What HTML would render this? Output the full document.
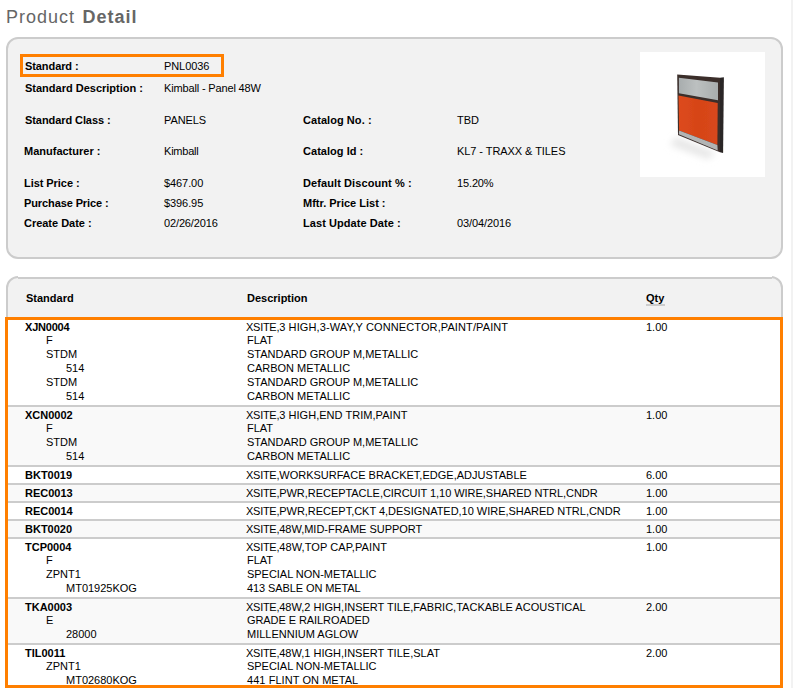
<!DOCTYPE html>
<html><head><meta charset="utf-8">
<style>
html,body{margin:0;padding:0;background:#fff;}
body{width:793px;height:688px;overflow:hidden;position:relative;font-family:"Liberation Sans",sans-serif;font-size:11px;line-height:13px;color:#000;}
.abs{position:absolute;white-space:nowrap;}
h1{position:absolute;left:6px;top:7px;margin:0;font-size:18px;font-weight:normal;color:#666;letter-spacing:1px;line-height:21px;white-space:nowrap;}
h1 b{font-weight:bold;margin-left:1.4px;}
.strip{position:absolute;left:791px;top:0;width:2px;height:688px;background:#f2f2f2;}
.p1{position:absolute;left:6px;top:37px;width:773px;height:218px;border:2px solid #ccc;border-radius:12px;background:#f2f2f2;}
.hl{position:absolute;left:20px;top:54px;width:198px;height:17px;border:3px solid #ff7f00;}
.l{font-weight:bold;}
.img{position:absolute;left:640px;top:52px;width:125px;height:125px;background:#fff;}
.p2{position:absolute;left:6px;top:276px;width:773px;height:430px;border:2px solid #ccc;border-radius:12px;background:#f2f2f2;}
.tb{position:absolute;left:5px;top:317px;width:772px;height:365px;border:3px solid #ff7f00;}
.xs{letter-spacing:-0.27px;}
.row{position:absolute;left:8px;width:772px;border-top:2px solid #ccc;box-sizing:border-box;}
</style></head><body>
<h1>Product <b>Detail</b></h1>
<div class="strip"></div>
<div class="p1"></div>
<div class="hl"></div>
<div class="abs l" style="left:25px;top:60px;letter-spacing:-0.085px">Standard :</div>
<div class="abs" style="left:164px;top:60px;letter-spacing:-0.083px">PNL0036</div>
<div class="abs l" style="left:25px;top:82px">Standard Description :</div>
<div class="abs" style="left:164px;top:82px;letter-spacing:-0.151px">Kimball - Panel 48W</div>
<div class="abs l" style="left:25px;top:114px;letter-spacing:-0.078px">Standard Class :</div>
<div class="abs" style="left:164px;top:114px;letter-spacing:-0.085px">PANELS</div>
<div class="abs l" style="left:303px;top:114px;letter-spacing:0.059px">Catalog No. :</div>
<div class="abs" style="left:457px;top:114px">TBD</div>
<div class="abs l" style="left:24px;top:145px">Manufacturer :</div>
<div class="abs" style="left:164px;top:145px;letter-spacing:-0.211px">Kimball</div>
<div class="abs l" style="left:303px;top:145px;letter-spacing:0.034px">Catalog Id :</div>
<div class="abs" style="left:457px;top:145px;letter-spacing:-0.065px">KL7 - TRAXX &amp; TILES</div>
<div class="abs l" style="left:24px;top:177px;letter-spacing:-0.058px">List Price :</div>
<div class="abs" style="left:164px;top:177px;letter-spacing:-0.082px">$467.00</div>
<div class="abs l" style="left:303px;top:177px;letter-spacing:0.092px">Default Discount % :</div>
<div class="abs" style="left:457px;top:177px;letter-spacing:-0.135px">15.20%</div>
<div class="abs l" style="left:24px;top:197px;letter-spacing:-0.105px">Purchase Price :</div>
<div class="abs" style="left:164px;top:197px;letter-spacing:-0.082px">$396.95</div>
<div class="abs l" style="left:303px;top:197px">Mftr. Price List :</div>
<div class="abs l" style="left:24px;top:217px;letter-spacing:-0.024px">Create Date :</div>
<div class="abs" style="left:164px;top:217px;letter-spacing:-0.137px">02/26/2016</div>
<div class="abs l" style="left:303px;top:217px;letter-spacing:0.069px">Last Update Date :</div>
<div class="abs" style="left:457px;top:217px;letter-spacing:-0.117px">03/04/2016</div>
<svg class="img" width="125" height="125" viewBox="0 0 125 125">
<defs>
<filter id="bl" x="-10%" y="-10%" width="120%" height="120%"><feGaussianBlur stdDeviation="0.6"/></filter>
<filter id="sh" x="-40%" y="-40%" width="180%" height="180%"><feGaussianBlur stdDeviation="3.5"/></filter>
<linearGradient id="gg" x1="0" y1="0" x2="1" y2="0"><stop offset="0" stop-color="#a8adae"/><stop offset="0.45" stop-color="#bcc0c0"/><stop offset="1" stop-color="#a9adad"/></linearGradient>
<linearGradient id="og" x1="0" y1="0" x2="1" y2="0"><stop offset="0" stop-color="#dd4b1c"/><stop offset="0.5" stop-color="#d64418"/><stop offset="1" stop-color="#d8481b"/></linearGradient>
</defs>
<rect width="125" height="125" fill="#fff"/>
<polygon points="36,85 76,101 68,107 30,93" fill="#e6e6e6" filter="url(#sh)"/>
<g filter="url(#bl)">
<polygon points="37.2,22.4 80,25.8 80,100.3 38,83" fill="#3a2d2a"/>
<polygon points="80,25.8 83.9,25.3 83.1,100.9 80,100.3" fill="#2b2726"/>
<polygon points="38.9,25.7 78,30.4 78,48.2 38.9,41.3" fill="url(#gg)"/>
<polygon points="38.5,43.6 77.7,51 77.4,92.9 39.1,78.5" fill="url(#og)"/>
<polygon points="39.1,78.5 77.4,92.9 77.7,98.4 38.8,82.2" fill="#b2b4b4"/>
</g>
</svg>
<div class="p2"></div>
<div style="position:absolute;left:18px;top:276px;width:754px;height:1px;background:#fff"></div><div style="position:absolute;left:18px;top:278px;width:754px;height:1px;background:#ccc"></div>
<div class="abs l" style="left:26px;top:292px">Standard</div>
<div class="abs l" style="left:247px;top:292px">Description</div>
<div class="abs l" style="left:646px;top:292px">Qty</div><div style="position:absolute;left:646px;top:304px;width:19px;height:2px;background:#ccc"></div>
<div class="row" style="top:317px;height:88px;background:#fff"></div>
<div class="abs l" style="left:25px;top:321px;letter-spacing:-0.211px">XJN0004</div>
<div class="abs" style="left:246px;top:321px;letter-spacing:0.106px"><span class="xs">XSITE,</span>3 HIGH,3-WAY,Y CONNECTOR,PAINT/PAINT</div>
<div class="abs" style="left:646px;top:321px">1.00</div>
<div class="abs" style="left:46px;top:334px">F</div>
<div class="abs" style="left:247px;top:334px">FLAT</div>
<div class="abs" style="left:46px;top:348px">STDM</div>
<div class="abs" style="left:247px;top:348px">STANDARD GROUP M,METALLIC</div>
<div class="abs" style="left:66px;top:362px">514</div>
<div class="abs" style="left:247px;top:362px">CARBON METALLIC</div>
<div class="abs" style="left:46px;top:376px">STDM</div>
<div class="abs" style="left:247px;top:376px">STANDARD GROUP M,METALLIC</div>
<div class="abs" style="left:66px;top:390px">514</div>
<div class="abs" style="left:247px;top:390px">CARBON METALLIC</div>
<div class="row" style="top:405px;height:60px;background:#f9f9f9"></div>
<div class="abs l" style="left:25px;top:409px">XCN0002</div>
<div class="abs" style="left:246px;top:409px;letter-spacing:0.040px"><span class="xs">XSITE,</span>3 HIGH,END TRIM,PAINT</div>
<div class="abs" style="left:646px;top:409px">1.00</div>
<div class="abs" style="left:46px;top:422px">F</div>
<div class="abs" style="left:247px;top:422px">FLAT</div>
<div class="abs" style="left:46px;top:436px">STDM</div>
<div class="abs" style="left:247px;top:436px">STANDARD GROUP M,METALLIC</div>
<div class="abs" style="left:66px;top:450px">514</div>
<div class="abs" style="left:247px;top:450px">CARBON METALLIC</div>
<div class="row" style="top:465px;height:18px;background:#fff"></div>
<div class="abs l" style="left:25px;top:469px">BKT0019</div>
<div class="abs" style="left:246px;top:469px;letter-spacing:0.009px"><span class="xs">XSITE,</span>WORKSURFACE BRACKET,EDGE,ADJUSTABLE</div>
<div class="abs" style="left:646px;top:469px">6.00</div>
<div class="row" style="top:483px;height:18px;background:#f9f9f9"></div>
<div class="abs l" style="left:25px;top:487px">REC0013</div>
<div class="abs" style="left:246px;top:487px;letter-spacing:-0.043px"><span class="xs">XSITE,</span>PWR,RECEPTACLE,CIRCUIT 1,10 WIRE,SHARED NTRL,CNDR</div>
<div class="abs" style="left:646px;top:487px">1.00</div>
<div class="row" style="top:501px;height:18px;background:#fff"></div>
<div class="abs l" style="left:25px;top:505px">REC0014</div>
<div class="abs" style="left:246px;top:505px;letter-spacing:-0.021px"><span class="xs">XSITE,</span>PWR,RECEPT,CKT 4,DESIGNATED,10 WIRE,SHARED NTRL,CNDR</div>
<div class="abs" style="left:646px;top:505px">1.00</div>
<div class="row" style="top:519px;height:18px;background:#f9f9f9"></div>
<div class="abs l" style="left:25px;top:523px">BKT0020</div>
<div class="abs" style="left:246px;top:523px;letter-spacing:-0.018px"><span class="xs">XSITE,</span>48W,MID-FRAME SUPPORT</div>
<div class="abs" style="left:646px;top:523px">1.00</div>
<div class="row" style="top:537px;height:60px;background:#fff"></div>
<div class="abs l" style="left:25px;top:541px">TCP0004</div>
<div class="abs" style="left:246px;top:541px;letter-spacing:0.093px"><span class="xs">XSITE,</span>48W,TOP CAP,PAINT</div>
<div class="abs" style="left:646px;top:541px">1.00</div>
<div class="abs" style="left:46px;top:554px">F</div>
<div class="abs" style="left:247px;top:554px">FLAT</div>
<div class="abs" style="left:46px;top:568px">ZPNT1</div>
<div class="abs" style="left:247px;top:568px;letter-spacing:-0.035px">SPECIAL NON-METALLIC</div>
<div class="abs" style="left:66px;top:582px">MT01925KOG</div>
<div class="abs" style="left:247px;top:582px;letter-spacing:-0.098px">413 SABLE ON METAL</div>
<div class="row" style="top:597px;height:46px;background:#f9f9f9"></div>
<div class="abs l" style="left:25px;top:601px">TKA0003</div>
<div class="abs" style="left:246px;top:601px;letter-spacing:0.009px"><span class="xs">XSITE,</span>48W,2 HIGH,INSERT TILE,FABRIC,TACKABLE ACOUSTICAL</div>
<div class="abs" style="left:646px;top:601px">2.00</div>
<div class="abs" style="left:46px;top:614px">E</div>
<div class="abs" style="left:247px;top:614px;letter-spacing:-0.077px">GRADE E RAILROADED</div>
<div class="abs" style="left:66px;top:628px">28000</div>
<div class="abs" style="left:247px;top:628px">MILLENNIUM AGLOW</div>
<div class="row" style="top:643px;height:45px;background:#fff"></div>
<div class="abs l" style="left:25px;top:647px">TIL0011</div>
<div class="abs" style="left:246px;top:647px;letter-spacing:0.004px"><span class="xs">XSITE,</span>48W,1 HIGH,INSERT TILE,SLAT</div>
<div class="abs" style="left:646px;top:647px">2.00</div>
<div class="abs" style="left:46px;top:660px">ZPNT1</div>
<div class="abs" style="left:247px;top:660px;letter-spacing:-0.035px">SPECIAL NON-METALLIC</div>
<div class="abs" style="left:66px;top:674px">MT02680KOG</div>
<div class="abs" style="left:247px;top:674px;letter-spacing:0.058px">441 FLINT ON METAL</div>
<div class="tb"></div>
</body></html>
